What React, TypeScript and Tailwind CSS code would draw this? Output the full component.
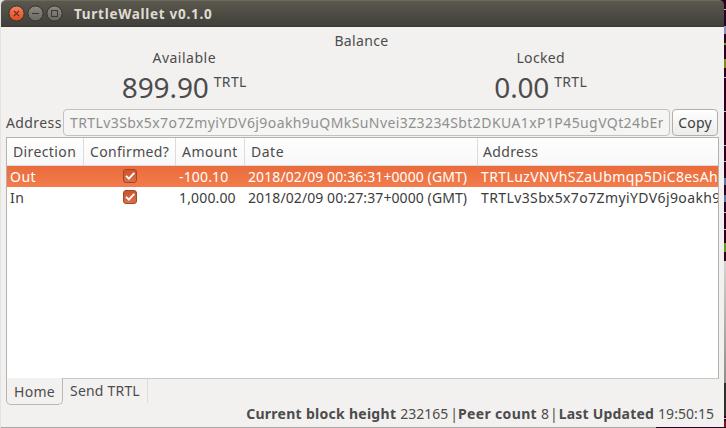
import type { ReactNode } from 'react';

function Check() {
  return (
    <svg width="14" height="14" viewBox="0 0 14 14">
      <defs>
        <linearGradient id="box" x1="0" y1="0" x2="0" y2="1">
          <stop offset="0" stopColor="#cf5229" />
          <stop offset="1" stopColor="#d9714d" />
        </linearGradient>
      </defs>
      <rect x="0.5" y="0.5" width="13" height="13" rx="2.5" fill="url(#box)" stroke="#a3472b" />
      <path d="M3 6.8 L5.9 9.7 L11.3 3.9" fill="none" stroke="#fff" strokeWidth="1.9" />
    </svg>
  );
}

function WindowButton({ close, children }: { close?: boolean; children: ReactNode }) {
  return (
    <svg width="17" height="17" viewBox="0 0 17 17" className="shrink-0">
      <defs>
        <linearGradient id={close ? 'hot' : 'cool'} x1="0" y1="0" x2="0" y2="1">
          <stop offset="0" stopColor={close ? '#f58363' : '#8c8a83'} />
          <stop offset="1" stopColor={close ? '#dd4a1c' : '#686760'} />
        </linearGradient>
      </defs>
      <circle cx="8.5" cy="8.5" r="7.6" fill={close ? 'url(#hot)' : 'url(#cool)'} stroke="#33322e" strokeWidth="1" />
      <g fill="none" stroke={close ? '#5d2918' : '#3c3b37'} strokeWidth="1.1">{children}</g>
    </svg>
  );
}

const rows = [
  { dir: 'Out', amount: '-100.10', date: '2018/02/09 00:36:31+0000 (GMT)', address: 'TRTLuzVNVhSZaUbmqp5DiC8esAh', selected: true },
  { dir: 'In', amount: '1,000.00', date: '2018/02/09 00:27:37+0000 (GMT)', address: 'TRTLv3Sbx5x7o7ZmyiYDV6j9oakh9', selected: false },
];

const marks = [
  'mt-[9px] h-px bg-[#c9c3c7]',
  'mt-[16px] h-[8px] bg-[#8d93b8]',
  'mt-[9px] h-[2px] bg-[#62a51c]',
  'mt-[14px] h-[9px] bg-[#7f8a1c]',
  'mt-[9px] h-px bg-[#c9c3c7]',
  'mt-[33px] h-px bg-[#c9c3c7]',
  'mt-[33px] h-px bg-[#c9c3c7]',
  'mt-[15px] h-px bg-[#c9c3c7]',
  'mt-[16px] h-[7px] bg-[#5c78a4]',
  'mt-[10px] h-[7px] bg-[#5c78a4]',
  'mt-[10px] h-px bg-[#c9c3c7]',
  'mt-[16px] h-px bg-[#c9c3c7]',
  'mt-[13px] h-[9px] bg-[#5c9a20]',
];

const columns = 'grid grid-cols-[77px_92px_69px_233px_240px]';

function Balance({ label, labelClass, value, valueClass }: { label: string; labelClass: string; value: string; valueClass: string }) {
  return (
    <div className="flex flex-1 flex-col items-center">
      <p className={labelClass}>{label}</p>
      <div className="flex items-start pt-1">
        <span className={`text-[28px] leading-[34px] ${valueClass}`}>{value}</span>
        <span className="ml-[5px] mt-[3px] tracking-[0.35px]">TRTL</span>
      </div>
    </div>
  );
}

export default function App() {
  return (
    <div className="flex h-[428px] w-[726px] overflow-hidden whitespace-nowrap bg-[#e4e3e1] pl-px font-['Noto_Sans','Ubuntu',sans-serif] text-[14px] leading-[17px] text-[#4c4c4c]">
      <div className="flex h-[428px] w-[723px] shrink-0 flex-col">
        <div className="bg-[linear-gradient(90deg,#e4e3e1_50%,#2c001e_50%)]">
          <header className="flex h-[27px] items-center rounded-t-[5px] border-t border-[#6b695c] border-b border-b-[#3a3934] bg-linear-to-b from-[#5b584e] to-[#403f3a] pl-[7px] text-[#dfdbd2]">
            <div className="flex gap-[2px]">
              <WindowButton close><path d="M5.9 5.9 L11.1 11.1 M11.1 5.9 L5.9 11.1" /></WindowButton>
              <WindowButton><path d="M5 8.5 H12" /></WindowButton>
              <WindowButton><rect x="5.5" y="5.5" width="6" height="6" /></WindowButton>
            </div>
            <h1 className="ml-[11px] pt-px text-[13.5px] font-bold tracking-[0.72px]">TurtleWallet v0.1.0</h1>
          </header>
        </div>

        <main className="flex h-[400px] flex-col bg-[#f2f1f0] px-[5px] pt-[5px]">
          <p className="pr-[2px] text-center tracking-[0.35px]">Balance</p>
          <div className="flex h-[60px]">
            <Balance label="Available" labelClass="tracking-[0.5px]" value="899.90" valueClass="tracking-[-0.1px]" />
            <Balance label="Locked" labelClass="tracking-[0.35px]" value="0.00" valueClass="tracking-[-0.2px]" />
          </div>

          <div className="flex h-[27px] items-center">
            <span className="w-[57px] tracking-[0.4px]">Address</span>
            <div className="h-[27px] w-[607px] rounded-[4px] border border-[#c4c2bf] bg-[#f5f5f4] px-[6px] leading-[25px] text-[#8f8f8f]">
              <div className="overflow-hidden tracking-[0.41px]">TRTLv3Sbx5x7o7ZmyiYDV6j9oakh9uQMkSuNvei3Z3234Sbt2DKUA1xP1P45ugVQt24bEm</div>
            </div>
            <button className="ml-[2px] h-[27px] w-[46px] rounded-[4px] border border-[#b3b0ac] bg-linear-to-b from-white to-[#ececeb] tracking-[0.2px] text-[#3c3c3c]">Copy</button>
          </div>

          <section className="mt-px h-[242px] w-[713px] shrink-0 overflow-hidden border border-[#b6b3af] border-b-[#cbc9c6] bg-white">
            <div className={`${columns} h-[28px] border-b border-[#dcdad8] bg-linear-to-b from-white to-[#f8f8f8] leading-[27px]`}>
              <span className="border-r border-[#dedcda] pl-[6px] tracking-[0.38px]">Direction</span>
              <span className="border-r border-[#dedcda] pl-[6px] tracking-[0.33px]">Confirmed?</span>
              <span className="border-r border-[#dedcda] pl-[6px] tracking-[0.5px]">Amount</span>
              <span className="border-r border-[#dedcda] pl-[6px] tracking-[0.5px]">Date</span>
              <span className="pl-[5px] tracking-[0.35px]">Address</span>
            </div>
            {rows.map((r) => (
              <div key={r.dir} className={`${columns} h-[21px] leading-[21px] ${r.selected ? 'bg-linear-to-b from-[#ea6b3b] to-[#f37c4c] text-white' : 'text-[#3c3c3c]'}`}>
                <span className="pl-[3px] tracking-[0.45px]">{r.dir}</span>
                <span className="flex items-start justify-center pt-[3px]"><Check /></span>
                <span className="pl-[3px] tracking-[0.15px]">{r.amount}</span>
                <span className="pl-[3px] tracking-[0.09px]">{r.date}</span>
                <span className="overflow-hidden pl-[3px] tracking-[0.39px]">{r.address}</span>
              </div>
            ))}
          </section>

          <nav className="flex h-[26px] items-start">
            <span className="-mt-px h-[27px] w-[57px] rounded-b-[5px] border border-t-0 border-[#bab7b4] bg-[#f2f1f0] pl-[7px] leading-[27px] tracking-[0.3px]">Home</span>
            <span className="h-[24px] w-[85px] border-r border-[#dfddda] pl-[7px] leading-[24px] tracking-[0.2px]">Send TRTL</span>
          </nav>

          <footer className="flex justify-end gap-[4px] pr-[5px] leading-[17px]">
            <b className="tracking-[0.28px]">Current block height</b>
            <span>232165</span>
            <span className="-ml-[2px] -mr-[4px]">|</span>
            <b className="tracking-[0.34px]">Peer count</b>
            <span>8</span>
            <span className="-ml-[3px] -mr-[3px]">|</span>
            <b className="tracking-[0.2px]">Last Updated</b>
            <span className="tracking-[0.05px]">19:50:15</span>
          </footer>
        </main>
        <div className="h-px bg-[linear-gradient(90deg,#aaa8a5_655px,#2c001e_655px)]" />
      </div>
      <aside className="flex h-[428px] w-[2px] flex-col bg-[#2c001e]">
        <div className="h-[261px] overflow-hidden">
          {marks.map((m, i) => <div key={i} className={m} />)}
        </div>
        <div className="h-[122px] bg-linear-to-b from-[#d5d3d0] to-[#8f8d8a]" />
        <div className="h-[33px] bg-[#2f2e2b]" />
        <div className="mt-[2px] h-px bg-[#c9c3c7]" />
        <div className="mt-[2px] h-[6px] bg-[#7c1420]" />
      </aside>
    </div>
  );
}
